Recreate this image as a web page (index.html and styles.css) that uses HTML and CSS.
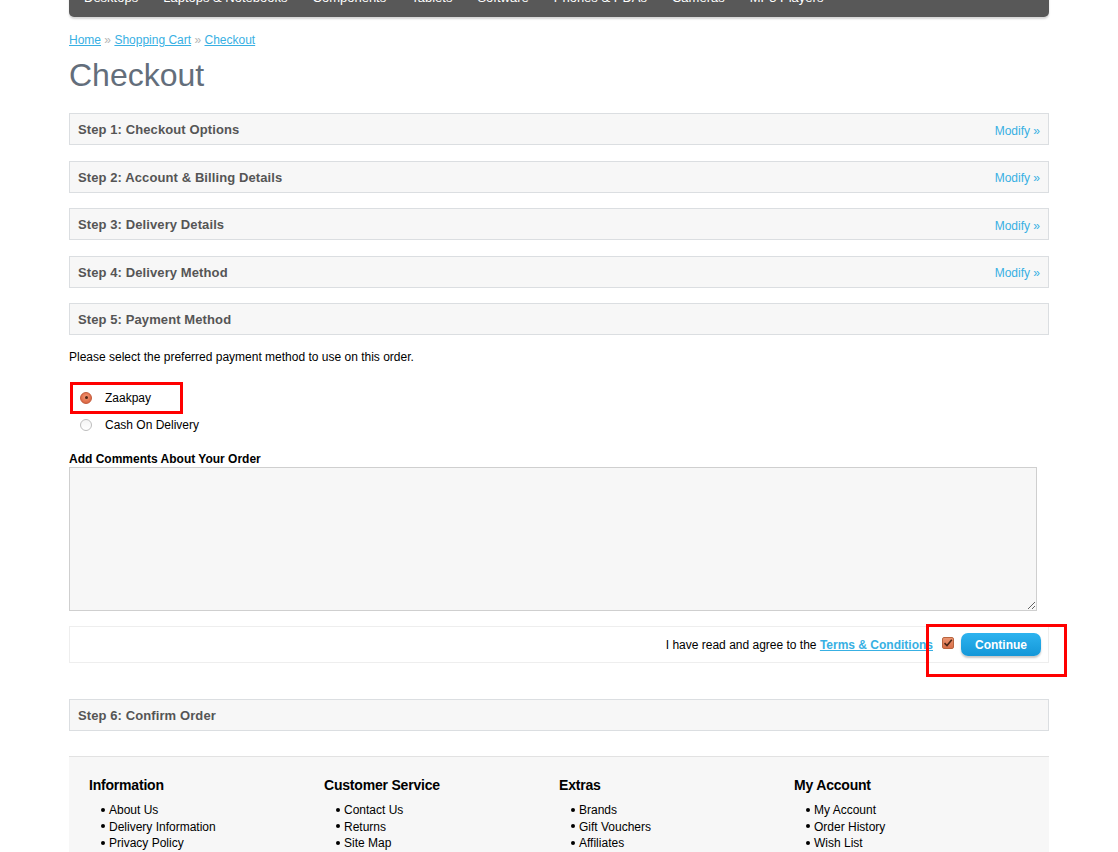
FILE: index.html
```html
<!DOCTYPE html>
<html>
<head>
<meta charset="utf-8">
<title>Checkout</title>
<link rel="stylesheet" href="styles.css">
</head>
<body>
<div class="container">
  <nav class="menu">
    <ul>
      <li>Desktops</li>
      <li>Laptops &amp; Notebooks</li>
      <li>Components</li>
      <li>Tablets</li>
      <li>Software</li>
      <li>Phones &amp; PDAs</li>
      <li>Cameras</li>
      <li>MP3 Players</li>
    </ul>
  </nav>

  <div class="breadcrumb">
    <a href="#">Home</a> <span class="sep">»</span> <a href="#">Shopping Cart</a> <span class="sep">»</span> <a href="#">Checkout</a>
  </div>

  <h1 class="title">Checkout</h1>

  <div class="checkout">
    <div class="step">
      <div class="step-heading"><span>Step 1: Checkout Options</span><a href="#" class="modify">Modify »</a></div>
    </div>
    <div class="step">
      <div class="step-heading"><span>Step 2: Account &amp; Billing Details</span><a href="#" class="modify">Modify »</a></div>
    </div>
    <div class="step">
      <div class="step-heading"><span>Step 3: Delivery Details</span><a href="#" class="modify">Modify »</a></div>
    </div>
    <div class="step">
      <div class="step-heading"><span>Step 4: Delivery Method</span><a href="#" class="modify">Modify »</a></div>
    </div>
    <div class="step step-active">
      <div class="step-heading"><span>Step 5: Payment Method</span></div>
      <div class="step-content">
        <p class="intro">Please select the preferred payment method to use on this order.</p>
        <div class="payment-list">
          <div class="payment-row">
            <span class="radio radio-on"></span>
            <span class="payment-label">Zaakpay</span>
          </div>
          <div class="payment-row">
            <span class="radio"></span>
            <span class="payment-label">Cash On Delivery</span>
          </div>
          <div class="annot annot-pay"></div>
        </div>
        <div class="comment-label">Add Comments About Your Order</div>
        <textarea class="comment"></textarea>
        <div class="buttons">
          <span class="agree">I have read and agree to the <a href="#" class="terms">Terms &amp; Conditions</a></span>
          <span class="checkbox">
            <svg width="10" height="10" viewBox="0 0 10 10"><path d="M1.5 5.2 L4 7.6 L8.8 1.8" fill="none" stroke="#4a2618" stroke-width="1.6"/></svg>
          </span>
          <span class="button">Continue</span>
          <div class="annot annot-continue"></div>
        </div>
      </div>
    </div>
    <div class="step">
      <div class="step-heading"><span>Step 6: Confirm Order</span></div>
    </div>
  </div>

  <footer class="footer">
    <div class="column">
      <h3>Information</h3>
      <ul>
        <li>About Us</li>
        <li>Delivery Information</li>
        <li>Privacy Policy</li>
      </ul>
    </div>
    <div class="column">
      <h3>Customer Service</h3>
      <ul>
        <li>Contact Us</li>
        <li>Returns</li>
        <li>Site Map</li>
      </ul>
    </div>
    <div class="column">
      <h3>Extras</h3>
      <ul>
        <li>Brands</li>
        <li>Gift Vouchers</li>
        <li>Affiliates</li>
      </ul>
    </div>
    <div class="column">
      <h3>My Account</h3>
      <ul>
        <li>My Account</li>
        <li>Order History</li>
        <li>Wish List</li>
      </ul>
    </div>
  </footer>
</div>
</body>
</html>
```

FILE: styles.css
```css
html, body {
  margin: 0;
  padding: 0;
  background: #fff;
}
body {
  font-family: "Liberation Sans", Arial, sans-serif;
  font-size: 12px;
  color: #000;
  overflow: hidden;
}
.container {
  width: 980px;
  margin: 0 auto;
}

/* top menu (page scrolled, only bottom visible) */
.menu {
  height: 40px;
  margin-top: -23px;
  background: #585858;
  border-radius: 0 0 5px 5px;
  box-shadow: 0 2px 2px #d6d6d6;
  box-sizing: border-box;
  padding: 13px 0 0 15px;
}
.menu ul {
  list-style: none;
  margin: 0;
  padding: 0;
  display: flex;
  gap: 25px;
}
.menu li {
  color: #fff;
  font-size: 13px;
  line-height: 16px;
}

/* breadcrumb */
.breadcrumb {
  margin-top: 15px;
  line-height: 16px;
  font-size: 12px;
  color: #aaa;
}
.breadcrumb a {
  color: #38b0e3;
  text-decoration: underline;
}
.breadcrumb .sep {
  color: #b5b5b5;
}

.title {
  margin: 9px 0 0 0;
  font-size: 32px;
  line-height: 37px;
  font-weight: normal;
  color: #636e7b;
  height: 56px;
}

/* steps */
.step {
  margin-bottom: 15.5px;
}
.step-heading {
  height: 32px;
  box-sizing: border-box;
  border: 1px solid #dbdee1;
  background: #f7f7f7;
  padding: 1px 8px 0 8px;
  display: flex;
  align-items: center;
  justify-content: space-between;
  font-size: 13px;
  font-weight: bold;
  color: #555;
  letter-spacing: 0.1px;
}
.modify {
  font-size: 12px;
  font-weight: normal;
  color: #38b0e3;
  text-decoration: none;
  letter-spacing: 0;
  margin-top: 2px;
}
.step-active {
  margin-bottom: 36px;
}
.step-content {
  padding-top: 14px;
}
.intro {
  margin: 0 0 19px 0;
  line-height: 16px;
}
.payment-list {
  position: relative;
}
.payment-row {
  height: 27px;
  display: flex;
  align-items: center;
  padding-left: 11px;
}
.payment-label {
  font-size: 12px;
  margin-left: 13px;
}
.radio {
  width: 12px;
  height: 12px;
  box-sizing: border-box;
  border-radius: 50%;
  border: 1px solid #bdbdbd;
  background: linear-gradient(#f4f4f4, #ffffff);
  position: relative;
}
.radio-on {
  border-color: #c2593a;
  background: radial-gradient(circle at 50% 40%, #f39a78 0%, #e1704c 60%, #cf5e3c 100%);
}
.radio-on::after {
  content: "";
  position: absolute;
  left: 3.5px;
  top: 3.5px;
  width: 3px;
  height: 3px;
  border-radius: 50%;
  background: #4e2414;
}

.annot {
  position: absolute;
  border: 3px solid #f00;
  box-sizing: border-box;
  pointer-events: none;
}
.annot-pay {
  left: 1px;
  top: -2px;
  width: 113px;
  height: 32px;
}

.comment-label {
  margin-top: 13px;
  font-weight: bold;
  line-height: 16px;
}
.comment {
  display: block;
  width: 968px;
  height: 144px;
  box-sizing: border-box;
  border: 1px solid #cfcfcf;
  background: #f7f7f7;
  margin: 0;
  font-family: inherit;
  resize: both;
}

.buttons {
  position: relative;
  margin-top: 15px;
  height: 37px;
  box-sizing: border-box;
  border: 1px solid #eeeeee;
  padding: 0 7px 0 0;
  display: flex;
  align-items: center;
  justify-content: flex-end;
}
.agree {
  font-size: 12px;
  margin-right: 9px;
}
.terms {
  color: #38b0e3;
  font-weight: bold;
  text-decoration: underline;
}
.checkbox {
  width: 12px;
  height: 12px;
  box-sizing: border-box;
  border: 1px solid #b9653f;
  border-radius: 2px;
  background: linear-gradient(#eb9471, #d9704a);
  display: flex;
  align-items: center;
  justify-content: center;
  margin-right: 7px;
  margin-top: -3px;
}
.button {
  width: 80px;
  height: 23px;
  border-radius: 7px;
  background: linear-gradient(#2db3ef, #1497d8);
  color: #fff;
  font-weight: bold;
  font-size: 12px;
  display: flex;
  align-items: center;
  justify-content: center;
  box-shadow: 0 2px 2px rgba(0, 0, 0, 0.22);
}
.annot-continue {
  right: -19px;
  top: -3px;
  width: 141px;
  height: 53px;
}

/* footer */
.footer {
  margin-top: 25px;
  border-top: 1px solid #e2e2e2;
  background: #f7f7f7;
  padding: 20px 0 30px 0;
  display: grid;
  grid-template-columns: repeat(4, 235px);
}
.column {
  padding-left: 20px;
}
.column h3 {
  margin: 0 0 8px 0;
  font-size: 14px;
  line-height: 17px;
  font-weight: bold;
  color: #000;
  letter-spacing: -0.2px;
}
.column ul {
  margin: 0;
  padding: 0;
  list-style: none;
}
.column li {
  font-size: 12px;
  line-height: 16.5px;
  color: #000;
}
.column li::before {
  content: "";
  display: inline-block;
  width: 4px;
  height: 4px;
  border-radius: 50%;
  background: #000;
  margin: 0 4px 2px 12px;
  vertical-align: middle;
}
```
